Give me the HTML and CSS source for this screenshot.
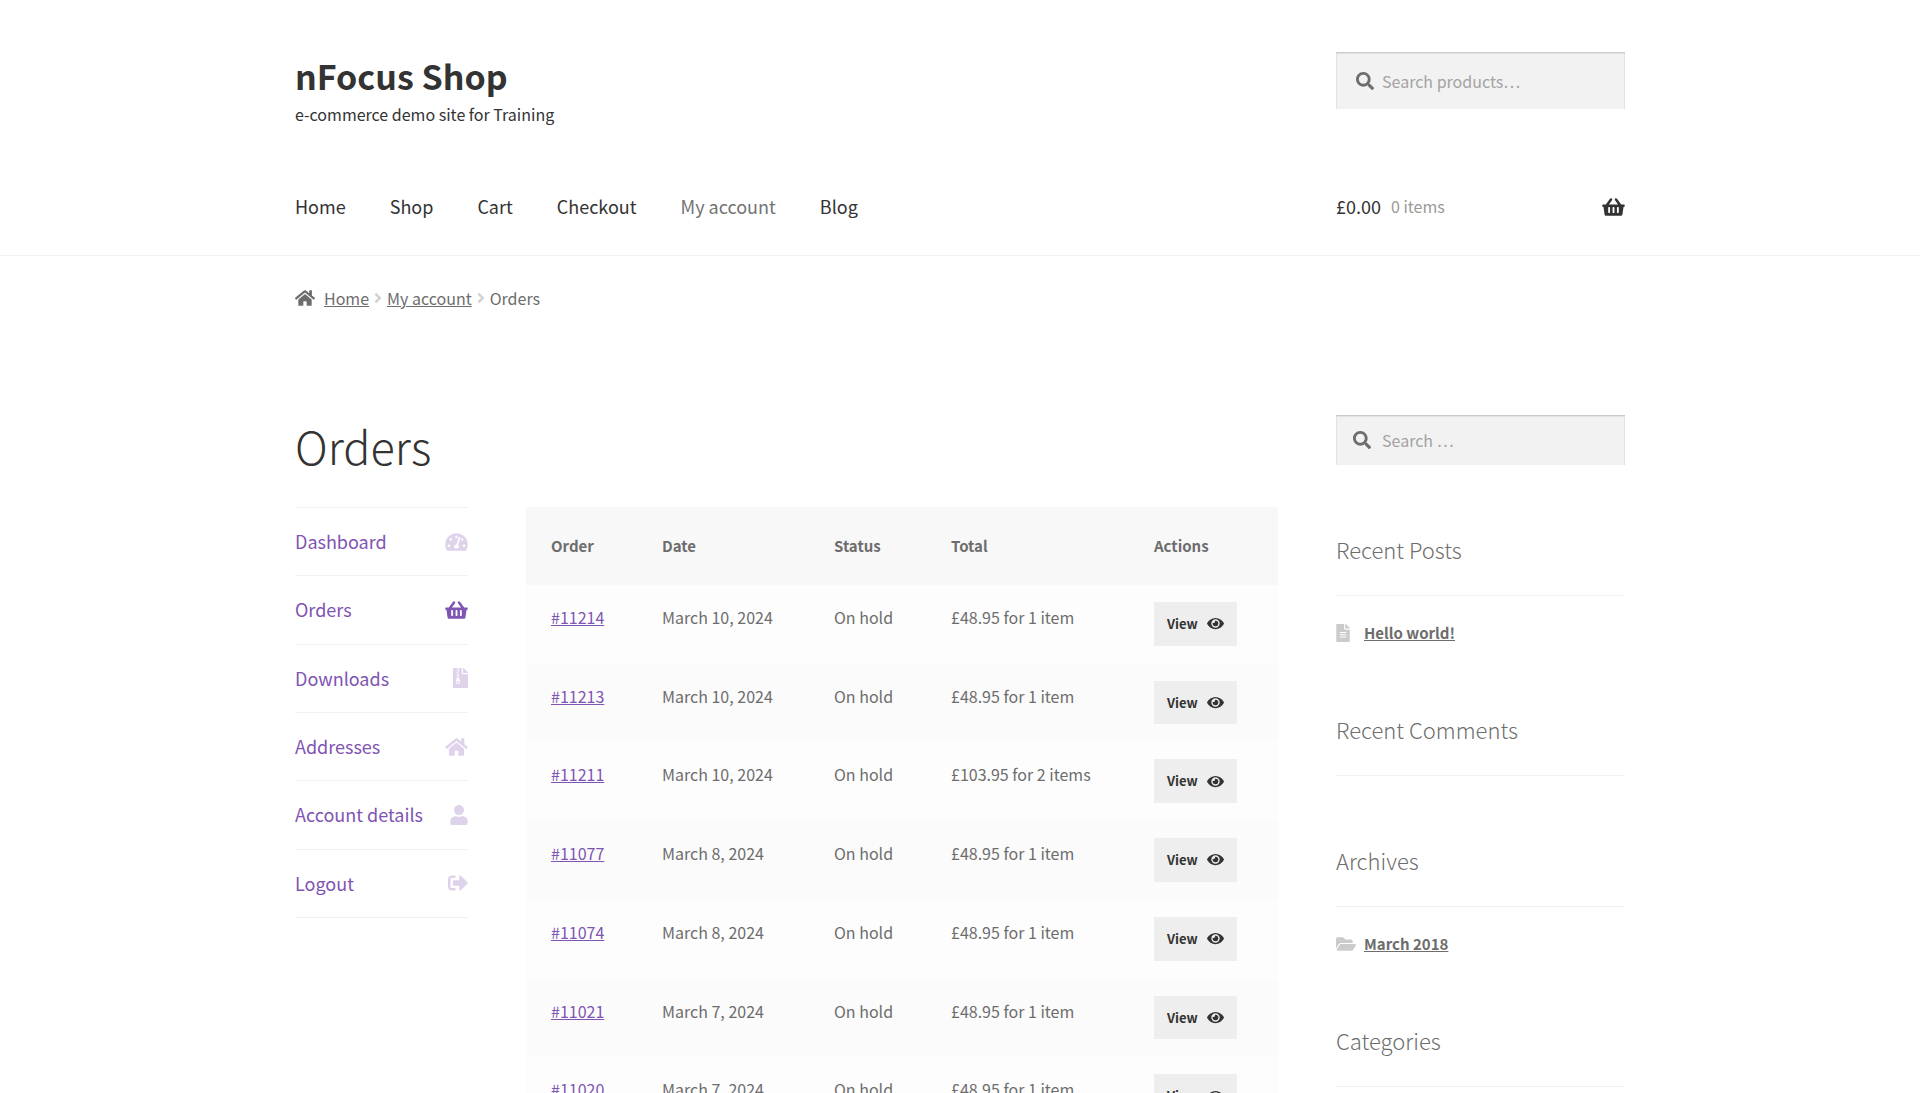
FILE: index.html
```html
<!DOCTYPE html>
<html lang="en">
<head>
<meta charset="utf-8">
<meta name="viewport" content="width=device-width, initial-scale=1">
<title>Orders – nFocus Shop</title>
<link rel="stylesheet" href="styles.css">
</head>
<body>
<svg class="sprite" aria-hidden="true">
  <symbol id="search" viewBox="0 0 512 512"><path d="M505 442.7L405.3 343c-4.5-4.5-10.6-7-17-7H372c27.6-35.3 44-79.7 44-128C416 93.1 322.9 0 208 0S0 93.1 0 208s93.1 208 208 208c48.3 0 92.7-16.4 128-44v16.3c0 6.4 2.5 12.5 7 17l99.7 99.7c9.4 9.4 24.6 9.4 33.9 0l28.3-28.3c9.4-9.4 9.4-24.6.1-34zM208 336c-70.7 0-128-57.2-128-128 0-70.7 57.2-128 128-128 70.7 0 128 57.2 128 128 0 70.7-57.2 128-128 128z"/></symbol>
  <symbol id="basket" viewBox="0 0 576 512"><path d="M576 216v16c0 13.255-10.745 24-24 24h-8l-26.113 182.788C514.509 462.435 494.257 480 470.37 480H105.63c-23.887 0-44.139-17.565-47.518-41.212L32 256h-8c-13.255 0-24-10.745-24-24v-16c0-13.255 10.745-24 24-24h67.341l106.78-146.821c10.395-14.292 30.407-17.453 44.701-7.058 14.293 10.395 17.453 30.408 7.058 44.701L170.477 192h235.046L326.12 82.821c-10.395-14.292-7.234-34.306 7.059-44.701 14.291-10.395 34.306-7.235 44.701 7.058L484.659 192H552c13.255 0 24 10.745 24 24zM312 392V280c0-13.255-10.745-24-24-24s-24 10.745-24 24v112c0 13.255 10.745 24 24 24s24-10.745 24-24zm112 0V280c0-13.255-10.745-24-24-24s-24 10.745-24 24v112c0 13.255 10.745 24 24 24s24-10.745 24-24zm-224 0V280c0-13.255-10.745-24-24-24s-24 10.745-24 24v112c0 13.255 10.745 24 24 24s24-10.745 24-24z"/></symbol>
  <symbol id="home" viewBox="0 0 576 512"><path d="M280.37 148.26L96 300.11V464a16 16 0 0 0 16 16l112.06-.29a16 16 0 0 0 15.92-16V368a16 16 0 0 1 16-16h64a16 16 0 0 1 16 16v95.64a16 16 0 0 0 16 16.05L464 480a16 16 0 0 0 16-16V300L295.67 148.26a12.19 12.19 0 0 0-15.3 0zM571.6 251.47L488 182.56V44.05a12 12 0 0 0-12-12h-56a12 12 0 0 0-12 12v72.61L318.47 43a48 48 0 0 0-61 0L4.34 251.47a12 12 0 0 0-1.6 16.9l25.5 31A12 12 0 0 0 45.15 301l235.22-193.74a12.19 12.19 0 0 1 15.3 0L530.9 301a12 12 0 0 0 16.9-1.6l25.5-31a12 12 0 0 0-1.7-16.93z"/></symbol>
  <symbol id="angle" viewBox="0 0 256 512"><path d="M224.3 273l-136 136c-9.4 9.4-24.6 9.4-33.9 0l-22.6-22.6c-9.4-9.4-9.4-24.6 0-33.9l96.4-96.4-96.4-96.4c-9.4-9.4-9.4-24.6 0-33.9L54.3 103c9.4-9.4 24.6-9.4 33.9 0l136 136c9.5 9.4 9.5 24.6.1 34z"/></symbol>
  <symbol id="user" viewBox="0 0 448 512"><path d="M224 256c70.7 0 128-57.3 128-128S294.7 0 224 0 96 57.3 96 128s57.3 128 128 128zm89.6 32h-16.7c-22.2 10.2-46.9 16-72.9 16s-50.6-5.8-72.9-16h-16.7C60.2 288 0 348.2 0 422.4V464c0 26.5 21.5 48 48 48h352c26.5 0 48-21.5 48-48v-41.6c0-74.2-60.2-134.4-134.4-134.4z"/></symbol>
  <symbol id="logout" viewBox="0 0 512 512"><path d="M497 273L329 441c-15 15-41 4.5-41-17v-96H152c-13.3 0-24-10.7-24-24v-96c0-13.3 10.7-24 24-24h136V88c0-21.4 25.9-32 41-17l168 168c9.3 9.4 9.3 24.6 0 34zM192 436v-40c0-6.6-5.4-12-12-12H96c-17.7 0-32-14.3-32-32V160c0-17.7 14.3-32 32-32h84c6.6 0 12-5.4 12-12V76c0-6.6-5.4-12-12-12H96c-53 0-96 43-96 96v192c0 53 43 96 96 96h84c6.6 0 12-5.4 12-12z"/></symbol>
  <symbol id="eye" viewBox="0 0 576 512"><path d="M572.52 241.4C518.29 135.59 410.93 64 288 64S57.68 135.64 3.48 241.41a32.35 32.35 0 0 0 0 29.19C57.71 376.41 165.07 448 288 448s230.32-71.64 284.52-177.41a32.35 32.35 0 0 0 0-29.19zM288 400a144 144 0 1 1 144-144 143.93 143.93 0 0 1-144 144zm0-240a95.31 95.31 0 0 0-25.31 3.79 47.85 47.85 0 0 1-66.9 66.9A95.78 95.78 0 1 0 288 160z"/></symbol>
  <symbol id="post" viewBox="0 0 384 512"><path d="M224 136V0H24C10.7 0 0 10.7 0 24v464c0 13.3 10.7 24 24 24h336c13.3 0 24-10.7 24-24V160H248c-13.2 0-24-10.8-24-24zm64 236c0 6.6-5.4 12-12 12H108c-6.6 0-12-5.4-12-12v-8c0-6.6 5.4-12 12-12h168c6.6 0 12 5.4 12 12v8zm0-64c0 6.6-5.4 12-12 12H108c-6.6 0-12-5.4-12-12v-8c0-6.6 5.4-12 12-12h168c6.6 0 12 5.4 12 12v8zm0-72v8c0 6.6-5.4 12-12 12H108c-6.6 0-12-5.4-12-12v-8c0-6.6 5.4-12 12-12h168c6.6 0 12 5.4 12 12zm96-114.1v6.1H256V0h6.1c6.4 0 12.5 2.5 17 7l97.9 98c4.5 4.5 7 10.6 7 16.9z"/></symbol>
  <symbol id="folder" viewBox="0 0 576 512"><path d="M572.694 292.093L500.27 416.248A63.997 63.997 0 0 1 444.989 448H45.025c-18.523 0-30.064-20.093-20.731-36.093l72.424-124.155A64 64 0 0 1 152 256h399.964c18.523 0 30.064 20.093 20.73 36.093zM152 224h328v-48c0-26.51-21.49-48-48-48H272l-64-64H48C21.49 64 0 85.49 0 112v278.046l69.077-118.418C86.214 242.25 117.989 224 152 224z"/></symbol>
  <symbol id="gauge" viewBox="0 0 576 512"><path d="M288 32C128.94 32 0 160.94 0 320c0 52.8 14.25 102.26 39.06 144.8 5.61 9.62 16.3 15.2 27.44 15.2h443c11.14 0 21.83-5.58 27.44-15.2C561.75 422.26 576 372.8 576 320c0-159.06-128.94-288-288-288zm0 64c14.71 0 26.58 10.13 30.32 23.65-1.11 2.26-2.64 4.23-3.45 6.67l-9.22 27.67c-5.13 3.49-10.97 6.01-17.64 6.01-17.67 0-32-14.33-32-32S270.33 96 288 96zM96 384c-17.67 0-32-14.33-32-32s14.33-32 32-32 32 14.33 32 32-14.33 32-32 32zm48-160c-17.67 0-32-14.33-32-32s14.33-32 32-32 32 14.33 32 32-14.33 32-32 32zm246.77-72.41l-61.33 184C343.13 347.33 352 364.54 352 384c0 11.72-3.38 22.55-8.88 32H232.88c-5.5-9.45-8.88-20.28-8.88-32 0-33.94 26.5-61.43 59.9-63.59l61.34-184.01c4.17-12.56 17.73-19.45 30.36-15.17 12.57 4.19 19.35 17.79 15.17 30.36zm14.66 57.2l15.52-46.55c3.47-1.29 7.13-2.23 11.05-2.23 17.67 0 32 14.33 32 32s-14.33 32-32 32c-11.38-.01-20.89-6.28-26.57-15.22zM480 384c-17.67 0-32-14.33-32-32s14.33-32 32-32 32 14.33 32 32-14.33 32-32 32z"/></symbol>
  <symbol id="archive" viewBox="0 0 384 512"><path d="M377 105L279.1 7c-4.5-4.5-10.6-7-17-7H256v128h128v-6.1c0-6.3-2.5-12.4-7-16.9zM128.4 336c-17.9 0-32.4 12.1-32.4 27 0 15 14.6 27 32.5 27s32.4-12.1 32.4-27-14.6-27-32.5-27zM224 136V0h-63.6v32h-32V0H24C10.7 0 0 10.7 0 24v464c0 13.3 10.7 24 24 24h336c13.3 0 24-10.7 24-24V160H248c-13.2 0-24-10.8-24-24zM95.9 32h32v32h-32zm32.3 384c-33.2 0-58-30.4-51.4-62.9L96.4 256v-32h32v-32h-32v-32h32v-32h-32V96h32V64h32v32h-32v32h32v32h-32v32h32v32h-32v32h22.1c5.7 0 10.7 4.1 11.8 9.7l17.3 87.7c6.4 32.4-18.4 62.6-51.4 62.6z"/></symbol>
</svg>

<header class="site-header">
  <div class="container">
    <div class="header-top columns">
      <div class="branding">
        <a class="site-title" href="#">nFocus Shop</a>
        <p class="tagline">e-commerce demo site for Training</p>
      </div>
      <form class="search-box search-products" role="search">
        <svg class="icon icon-small"><use href="#search"/></svg>
        <input type="search" placeholder="Search products…" aria-label="Search products">
      </form>
    </div>
    <div class="header-nav columns">
      <nav class="main-nav" aria-label="Primary">
        <a href="#">Home</a>
        <a href="#">Shop</a>
        <a href="#">Cart</a>
        <a href="#">Checkout</a>
        <a class="current" href="#">My account</a>
        <a href="#">Blog</a>
      </nav>
      <a class="cart" href="#">
        <span>£0.00</span>
        <span class="cart-count">0 items</span>
        <svg class="icon icon-wide"><use href="#basket"/></svg>
      </a>
    </div>
  </div>
</header>

<div class="container">
  <nav class="breadcrumb" aria-label="Breadcrumb">
    <svg class="icon icon-small-wide"><use href="#home"/></svg>
    <a href="#">Home</a>
    <svg class="icon angle"><use href="#angle"/></svg>
    <a href="#">My account</a>
    <svg class="icon angle"><use href="#angle"/></svg>
    <span>Orders</span>
  </nav>

  <div class="columns">
    <main>
      <h1>Orders</h1>
      <div class="account">
        <nav class="account-nav" aria-label="Account">
          <a href="#">Dashboard<svg class="icon icon-wide"><use href="#gauge"/></svg></a>
          <a class="active" href="#">Orders<svg class="icon icon-wide"><use href="#basket"/></svg></a>
          <a href="#">Downloads<svg class="icon icon-file"><use href="#archive"/></svg></a>
          <a href="#">Addresses<svg class="icon icon-wide"><use href="#home"/></svg></a>
          <a href="#">Account details<svg class="icon icon-user"><use href="#user"/></svg></a>
          <a href="#">Logout<svg class="icon"><use href="#logout"/></svg></a>
        </nav>
        <table class="orders">
          <colgroup><col class="col-order"><col class="col-date"><col class="col-status"><col class="col-total"><col class="col-actions"></colgroup>
          <thead>
            <tr><th scope="col">Order</th><th scope="col">Date</th><th scope="col">Status</th><th scope="col">Total</th><th scope="col">Actions</th></tr>
          </thead>
          <tbody>
            <tr><td><a href="#">#11214</a></td><td>March 10, 2024</td><td>On hold</td><td>£48.95 for 1 item</td><td><a class="button" href="#">View<svg class="icon eye"><use href="#eye"/></svg></a></td></tr>
            <tr><td><a href="#">#11213</a></td><td>March 10, 2024</td><td>On hold</td><td>£48.95 for 1 item</td><td><a class="button" href="#">View<svg class="icon eye"><use href="#eye"/></svg></a></td></tr>
            <tr><td><a href="#">#11211</a></td><td>March 10, 2024</td><td>On hold</td><td>£103.95 for 2 items</td><td><a class="button" href="#">View<svg class="icon eye"><use href="#eye"/></svg></a></td></tr>
            <tr><td><a href="#">#11077</a></td><td>March 8, 2024</td><td>On hold</td><td>£48.95 for 1 item</td><td><a class="button" href="#">View<svg class="icon eye"><use href="#eye"/></svg></a></td></tr>
            <tr><td><a href="#">#11074</a></td><td>March 8, 2024</td><td>On hold</td><td>£48.95 for 1 item</td><td><a class="button" href="#">View<svg class="icon eye"><use href="#eye"/></svg></a></td></tr>
            <tr><td><a href="#">#11021</a></td><td>March 7, 2024</td><td>On hold</td><td>£48.95 for 1 item</td><td><a class="button" href="#">View<svg class="icon eye"><use href="#eye"/></svg></a></td></tr>
            <tr><td><a href="#">#11020</a></td><td>March 7, 2024</td><td>On hold</td><td>£48.95 for 1 item</td><td><a class="button" href="#">View<svg class="icon eye"><use href="#eye"/></svg></a></td></tr>
          </tbody>
        </table>
      </div>
    </main>

    <aside class="sidebar">
      <form class="search-box search-site" role="search">
        <svg class="icon icon-small"><use href="#search"/></svg>
        <input type="search" placeholder="Search …" aria-label="Search">
      </form>
      <section class="widget">
        <h2>Recent Posts</h2>
        <ul>
          <li><span class="marker"><svg class="icon icon-post"><use href="#post"/></svg></span><a href="#">Hello world!</a></li>
        </ul>
      </section>
      <section class="widget">
        <h2>Recent Comments</h2>
      </section>
      <section class="widget">
        <h2>Archives</h2>
        <ul>
          <li><span class="marker"><svg class="icon icon-folder"><use href="#folder"/></svg></span><a href="#">March 2018</a></li>
        </ul>
      </section>
      <section class="widget">
        <h2>Categories</h2>
      </section>
    </aside>
  </div>
</div>
</body>
</html>
```

FILE: styles.css
```css
* {
  box-sizing: border-box;
}

body {
  margin: 0;
  background: #fff;
  color: #6d6d6d;
  font-family: "Noto Sans CJK SC", "Open Sans", sans-serif;
  font-size: 16px;
  line-height: 24px;
}

a {
  color: inherit;
}

h1,
h2,
p,
ul {
  margin: 0;
  padding: 0;
  font-weight: 300;
}

.sprite {
  display: none;
}

.icon {
  flex: none;
  width: 20px;
  height: 20px;
  fill: currentColor;
}

.icon-wide {
  width: 23px;
}

.icon-file {
  width: 15px;
}

.icon-user {
  width: 18px;
}

.icon-small {
  width: 18px;
  height: 18px;
}

.icon-small-wide {
  width: 20px;
  height: 18px;
}

.container {
  max-width: 1410px;
  margin: 0 auto;
  padding: 0 40px;
}

.columns {
  display: grid;
  grid-template-columns: minmax(0, 983fr) minmax(0, 289fr);
  column-gap: 58px;
  align-items: start;
}

/* Header */

.site-header {
  padding: 52px 0 35px;
  border-bottom: 1px solid #f0f0f0;
  color: #333;
}

.branding {
  padding-top: 4px;
}

.site-title {
  display: block;
  margin-bottom: 6px;
  font-size: 34px;
  font-weight: 700;
  line-height: 40px;
  text-decoration: none;
}

.tagline {
  font-weight: 400;
}

.header-nav {
  margin-top: 67px;
  font-size: 18px;
  line-height: 27px;
}

.main-nav {
  display: flex;
  gap: 44px;
}

.main-nav a,
.cart {
  text-decoration: none;
}

.main-nav .current {
  color: #737373;
}

.cart {
  display: flex;
  align-items: center;
  gap: 10px;
}

.cart-count {
  font-size: 16px;
  color: #999;
}

.cart .icon {
  margin-left: auto;
}

/* Search fields */

.search-box {
  display: flex;
  align-items: center;
  gap: 8px;
  height: 57px;
  padding: 0 20px;
  background: #f2f2f2;
  box-shadow: inset 0 1px 1px 1px rgba(0, 0, 0, 0.06), inset 0 1px 1px rgba(0, 0, 0, 0.12);
  color: #6d6d6d;
}

.search-box input {
  flex: 1;
  min-width: 0;
  padding: 0;
  border: 0;
  outline: 0;
  background: none;
  color: #43454b;
  font: inherit;
}

.search-box input::placeholder {
  color: #a3a3a3;
  opacity: 1;
}

.search-site {
  gap: 11px;
  height: 50px;
  padding: 0 17px;
}

/* Breadcrumb */

.breadcrumb {
  display: flex;
  align-items: center;
  margin: 30px 0 105px;
}

.breadcrumb a:first-of-type {
  margin-left: 9px;
}

.angle {
  width: 8px;
  height: 16px;
  margin: 0 5px;
  opacity: 0.3;
}

/* Account area */

h1 {
  margin-bottom: 30px;
  color: #333;
  font-size: 45px;
  line-height: 62px;
}

.account {
  display: grid;
  grid-template-columns: minmax(0, 173fr) minmax(0, 752fr);
  column-gap: 58px;
  align-items: start;
}

.account-nav {
  border-top: 1px solid #f0f0f0;
  color: #7f54b3;
  font-size: 18px;
  line-height: 1.52;
}

.account-nav a {
  display: flex;
  align-items: center;
  justify-content: space-between;
  padding: 20px 0;
  border-bottom: 1px solid #f0f0f0;
  text-decoration: none;
}

.account-nav .icon {
  opacity: 0.25;
}

.account-nav .active .icon {
  opacity: 1;
}

.orders {
  width: 100%;
  table-layout: fixed;
  border-collapse: collapse;
}

.col-order {
  width: 111px;
}

.col-date {
  width: 172px;
}

.col-status {
  width: 117px;
}

.col-total {
  width: 203px;
}

.col-actions {
  width: 149px;
}

.orders th {
  padding: 27px 0 27px 25px;
  background: #f8f8f8;
  font-size: 15px;
  font-weight: 700;
  text-align: left;
}

.orders td {
  padding: 17px 0 18px 25px;
  background: #fdfdfd;
  line-height: 30px;
  vertical-align: top;
}

.orders tr:nth-child(even) td {
  background: #fbfbfb;
}

.orders td a {
  color: #7f54b3;
}

.orders .button {
  display: flex;
  align-items: center;
  gap: 9px;
  width: fit-content;
  padding: 11px 13px;
  background: #eee;
  color: #333;
  font-size: 13px;
  font-weight: 700;
  line-height: 1.67;
  text-decoration: none;
}

.eye {
  width: 17px;
  height: 15px;
}

/* Sidebar */

.search-site,
.widget {
  margin-bottom: 66px;
}

.widget h2 {
  padding-bottom: 28px;
  border-bottom: 1px solid #f0f0f0;
  font-size: 22px;
  line-height: 36px;
}

.widget ul {
  margin-top: 24px;
  list-style: none;
}

.widget li {
  display: flex;
  align-items: center;
  font-size: 15px;
  font-weight: 700;
  line-height: 25px;
}

.marker {
  display: flex;
  width: 28px;
  opacity: 0.35;
}

.icon-post {
  width: 14px;
  height: 18px;
}

.icon-folder {
  width: 20px;
  height: 18px;
}
```
